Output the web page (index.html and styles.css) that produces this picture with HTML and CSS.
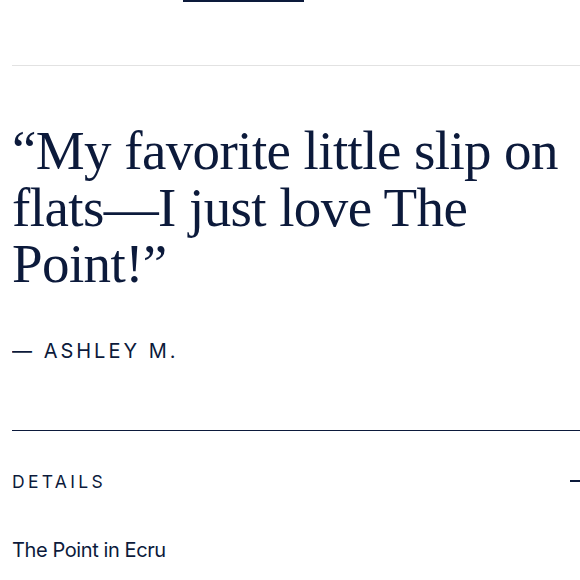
FILE: index.html
```html
<!DOCTYPE html>
<html>
<head>
<meta charset="utf-8">
<link rel="stylesheet" href="styles.css">
</head>
<body>
<div class="page">
  <div class="tabbar"><span class="tab-active"></span></div>
  <hr class="rule-light">
  <blockquote class="quote">
    <p class="quote-text">“My favorite little slip on flats—I just love The Point!”</p>
    <p class="quote-author">— ASHLEY M.</p>
  </blockquote>
  <section class="details">
    <div class="details-head">
      <span class="details-title">DETAILS</span>
      <span class="details-toggle"></span>
    </div>
    <p class="details-body">The Point in Ecru</p>
  </section>
</div>
</body>
</html>
```
FILE: styles.css
```css
html, body {
  margin: 0;
  padding: 0;
  background: #fff;
  overflow: hidden;
}
.page {
  width: 568px;
  margin-left: 12px;
  overflow: hidden;
  color: #0c1a3b;
}
.tabbar {
  height: 65px;
}
.tab-active {
  display: block;
  margin-left: 171px;
  width: 121px;
  height: 2px;
  background: #0c1a3b;
}
.rule-light {
  margin: 0;
  border: 0;
  height: 1px;
  background: #e2e2e2;
}
.quote {
  margin: 0;
  padding: 0;
}
.quote-text {
  margin: 57px 0 0;
  font-family: "Liberation Serif", serif;
  font-size: 55px;
  line-height: 56.5px;
  letter-spacing: -0.6px;
}
.quote-author {
  margin: 46px 0 0;
  font-family: Inter, sans-serif;
  font-size: 20px;
  letter-spacing: 3px;
  line-height: 24px;
}
.details {
  margin-top: 67px;
  border-top: 1.5px solid #0c1a3b;
}
.details-head {
  display: flex;
  justify-content: space-between;
  align-items: center;
  width: 572px;
  height: 101px;
}
.details-title {
  font-family: Inter, sans-serif;
  font-size: 17.5px;
  letter-spacing: 3.3px;
}
.details-toggle {
  flex: none;
  width: 14px;
  height: 2px;
  background: #0c1a3b;
}
.details-body {
  margin: 6px 0 0;
  font-family: Inter, sans-serif;
  font-size: 20px;
  line-height: 24px;
  letter-spacing: -0.4px;
}
```
